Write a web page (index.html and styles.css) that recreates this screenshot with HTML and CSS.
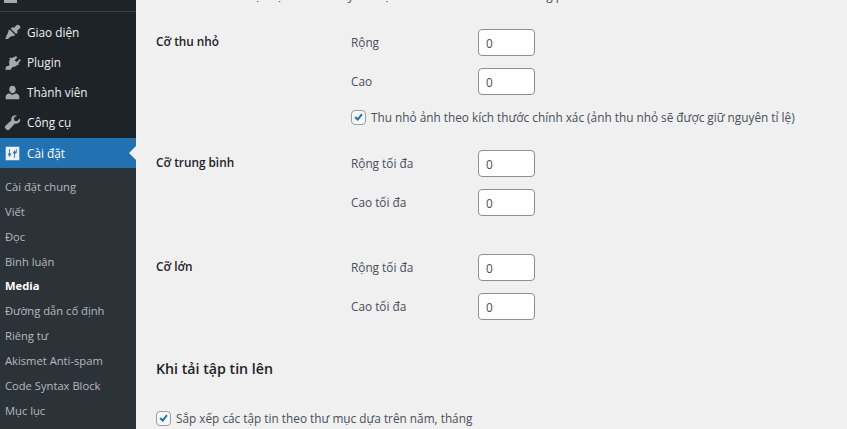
FILE: index.html
```html
<!DOCTYPE html>
<html lang="vi">
<head>
    <meta charset="UTF-8">
    <meta name="viewport" content="width=device-width, initial-scale=1.0">
    <title>Cài đặt Media</title>
    <link rel="stylesheet" href="styles.css">
</head>
<body>
    <!-- Sidebar -->
    <aside class="sidebar">
        <div class="menu-stub"><span class="stub-icon"></span></div>
        <nav class="menu">
            <a class="menu-item">
                <svg class="menu-icon" viewBox="0 0 20 20"><path d="M19 2.600c-.8-.9-2.300-1.600-3.700-1.600l-3.500 3.400-2.100-.5-1.800 1.700 6.300 6.300 1.800-1.800-.5-2.100L19 4.600c.4-.5.4-1.400 0-2zM7 6.800l6 6-1.600 1.500-1.600-.5-1.500 1.200-1.300-.1c-.5 1.100-1.600 2.300-3 2.600-.9.2-2 .2-2.900-.1 1-.7 1.600-1.800 1.600-3 0-.7.3-1.500.9-2.100l.9-.8-.2-1.300L5.300 9 5 7.700z"/></svg>
                <span>Giao diện</span>
            </a>
            <a class="menu-item">
                <svg class="menu-icon" viewBox="0 0 20 20"><path d="M14 2.500l1.800 1.300-3.400 3.700 2.700 2 3.200-3.600L20 7.200l-3.300 3.700 1 .8-1.200 1.400-.9-.5c-1.300 1.700-3.100 2.800-5.300 2.500l-1.600 1.900H8.500l-.4 1.500H1.500l.9-3.800 3.300-.9.800-1.800c-.9-2-.7-4.200.7-5.800L6 5.400 7.200 4l1.300 1z"/></svg>
                <span>Plugin</span>
            </a>
            <a class="menu-item">
                <svg class="menu-icon" viewBox="0 0 20 20"><path d="M10 2c2.200 0 3.900 1.900 3.900 4.300S12.200 11 10 11 6.100 8.700 6.100 6.300 7.800 2 10 2zm-3.800 9c1 .9 2.300 1.500 3.800 1.500s2.800-.6 3.800-1.500c2.500.5 4.200 2 4.200 3.800V18H2v-3.200C2 13 3.700 11.500 6.200 11z"/></svg>
                <span>Thành viên</span>
            </a>
            <a class="menu-item">
                <svg class="menu-icon" viewBox="0 0 20 20"><path d="M18.800 5.200c.6 1.700.2 3.600-1.100 4.900-1.300 1.300-3.200 1.600-4.800 1.100L6.300 18.300c-.9.900-2.300.9-3.200.1l-1.400-1.300c-.9-.9-.9-2.300 0-3.200l7.100-6.500c-.5-1.600-.1-3.400 1.200-4.700C11.300 1.400 13.300 1 15 1.600l-3.500 3.200.8 3 3 .8z"/></svg>
                <span>Công cụ</span>
            </a>
            <a class="menu-item active">
                <svg class="menu-icon" viewBox="0 0 20 20"><path fill-rule="evenodd" d="M2 2h16v16H2zM6 5v5H4.300l2.200 4 2.200-4H7V5zm7 10v-5h1.700l-2.200-4-2.200 4H12v5zM15 5h-1v4h1z"/></svg>
                <span>Cài đặt</span>
            </a>
        </nav>
        <ul class="submenu">
            <li>Cài đặt chung</li>
            <li>Viết</li>
            <li>Đọc</li>
            <li>Bình luận</li>
            <li class="current">Media</li>
            <li>Đường dẫn cố định</li>
            <li>Riêng tư</li>
            <li>Akismet Anti-spam</li>
            <li>Code Syntax Block</li>
            <li>Mục lục</li>
        </ul>
    </aside>

    <!-- Noi dung -->
    <main class="content">
        <p class="intro">Các kích thước được liệt kê dưới đây xác định kích thước tối đa tính bằng pixel khi thêm ảnh.</p>

        <section class="size-group">
            <h3 class="group-title">Cỡ thu nhỏ</h3>
            <div class="fields">
                <label class="field"><span>Rộng</span><input class="num" type="text" value="0"></label>
                <label class="field"><span>Cao</span><input class="num" type="text" value="0"></label>
                <label class="check check-crop"><span class="box"><svg viewBox="0 0 16 16"><path d="M3 8.200l1.900-1.800 2.100 2.300 4.300-5.700 1.900 1.500-6 7.900z"/></svg></span>Thu nhỏ ảnh theo kích thước chính xác (ảnh thu nhỏ sẽ được giữ nguyên tỉ lệ)</label>
            </div>
        </section>

        <section class="size-group">
            <h3 class="group-title">Cỡ trung bình</h3>
            <div class="fields">
                <label class="field"><span>Rộng tối đa</span><input class="num" type="text" value="0"></label>
                <label class="field"><span>Cao tối đa</span><input class="num" type="text" value="0"></label>
            </div>
        </section>

        <section class="size-group">
            <h3 class="group-title">Cỡ lớn</h3>
            <div class="fields">
                <label class="field"><span>Rộng tối đa</span><input class="num" type="text" value="0"></label>
                <label class="field"><span>Cao tối đa</span><input class="num" type="text" value="0"></label>
            </div>
        </section>

        <h2 class="upload-title">Khi tải tập tin lên</h2>
        <label class="check"><span class="box"><svg viewBox="0 0 16 16"><path d="M3 8.200l1.900-1.800 2.100 2.300 4.300-5.700 1.900 1.500-6 7.900z"/></svg></span>Sắp xếp các tập tin theo thư mục dựa trên năm, tháng</label>
    </main>
</body>
</html>
```

FILE: styles.css
```css
/* Genel */
html, body {
    height: 100%;
}

body {
    margin: 0;
    display: flex;
    height: 429px;
    overflow: hidden;
    background: #f0f0f1;
    color: #484f56;
    font-family: "Open Sans", "Noto Sans", sans-serif;
    font-size: 11.8px;
}

/* Sidebar */
.sidebar {
    width: 136px;
    flex-shrink: 0;
    background: #1d2327;
    display: flex;
    flex-direction: column;
}

.menu-stub {
    height: 11px;
    border-bottom: 1px solid #3a4046;
    padding-left: 4px;
    margin-bottom: 5px;
}

.stub-icon {
    display: block;
    width: 13px;
    height: 3px;
    background: #a7aaad;
}

.menu-item {
    display: flex;
    align-items: center;
    height: 30px;
    padding-left: 4px;
    color: #f0f0f1;
    position: relative;
}

.menu-icon {
    width: 17px;
    height: 17px;
    margin-right: 6px;
    fill: #a7aaad;
    flex-shrink: 0;
}

.menu-item.active {
    background: #2271b1;
    color: #fff;
    margin-top: 1px;
}

.menu-item.active .menu-icon {
    fill: #f0f0f1;
}

.menu-item.active::after {
    content: "";
    position: absolute;
    right: 0;
    top: 8px;
    border: 7px solid transparent;
    border-left: 0;
    border-right-color: #f0f0f1;
}

.submenu {
    flex: 1;
    list-style: none;
    margin: 0;
    padding: 7px 0 0 5px;
    background: #2c3338;
    color: #b4b9be;
    font-size: 11.2px;
}

.submenu li {
    height: 24.85px;
    line-height: 24.85px;
    white-space: nowrap;
}

.submenu .current {
    color: #fff;
    font-weight: 700;
}

/* Noi dung */
.content {
    flex: 1;
    padding-left: 20px;
    min-width: 0;
}

.intro {
    margin: -14px 0 0;
    height: 43px;
    line-height: 18px;
    white-space: nowrap;
}

.size-group {
    display: flex;
    margin-bottom: 38px;
}

.group-title {
    width: 195px;
    flex-shrink: 0;
    margin: 0;
    font-size: 11.8px;
    font-weight: 600;
    line-height: 25px;
    color: #1d2327;
}

.fields {
    display: flex;
    flex-direction: column;
    gap: 12px;
}

.field {
    display: flex;
    align-items: center;
}

.field span {
    width: 127px;
    padding-bottom: 2px;
}

.num {
    box-sizing: border-box;
    width: 57px;
    height: 27px;
    padding: 0 7px;
    border: 1px solid #8c8f94;
    border-radius: 4px;
    background: #fff;
    color: #484f56;
    font: inherit;
}

.check {
    display: flex;
    align-items: center;
    height: 16px;
    white-space: nowrap;
}

.check-crop {
    margin-top: 2px;
    margin-bottom: -13px;
}

.box {
    box-sizing: border-box;
    width: 15px;
    height: 15px;
    margin-right: 5px;
    border: 1px solid #9a9da1;
    border-radius: 4px;
    background: #f6f7f7;
    flex-shrink: 0;
}

.box svg {
    display: block;
    width: 13px;
    height: 13px;
    fill: #2271b1;
}

.upload-title {
    margin: 0 0 31px;
    padding-top: 1px;
    font-size: 14.2px;
    font-weight: 600;
    line-height: 20px;
    color: #1d2327;
}
```
